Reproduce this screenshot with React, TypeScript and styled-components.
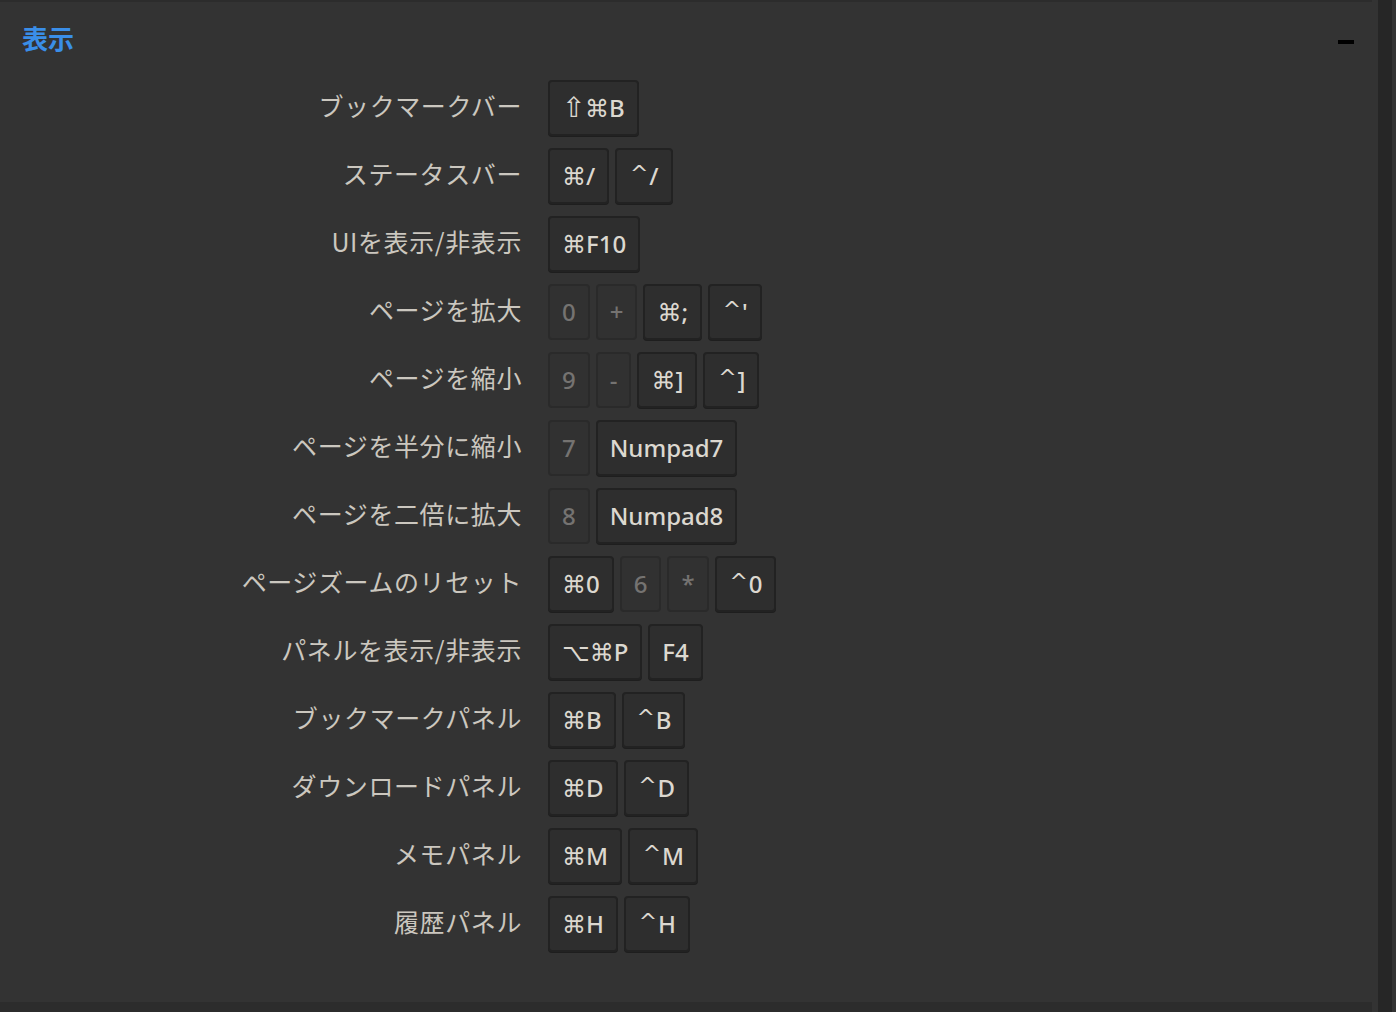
import React from "react";
import styled, { createGlobalStyle } from "styled-components";

const Global = createGlobalStyle`
  html, body { margin: 0; padding: 0; background: #2c2c2c; }
  body { font-family: "Noto Sans", "Noto Sans CJK JP", sans-serif; overflow: hidden; }
`;

const Page = styled.div`
  display: flex;
  width: 1396px;
  height: 1012px;
  background: #333333;
`;

const Main = styled.div`
  width: 1372px;
  height: 1012px;
  background: #2c2c2c;
  padding-top: 2px;
  box-sizing: border-box;
`;

const Gutter = styled.div`
  width: 6px;
  background: #333333;
`;

const Track = styled.div`
  width: 14px;
  background: #262626;
`;

const Edge = styled.div`
  width: 4px;
  background: #333333;
`;

const Section = styled.section`
  height: 1000px;
  background: #333333;
  box-sizing: border-box;
  padding: 18px 18px 0 22px;
`;

const Header = styled.div`
  display: flex;
  align-items: center;
  justify-content: space-between;
  height: 36px;
`;

const Title = styled.h2`
  margin: 0;
  font-family: "Noto Sans CJK JP", sans-serif;
  font-size: 26px;
  font-weight: 700;
  color: #3a8ee8;
  line-height: 36px;
`;

const Collapse = styled.button`
  width: 16px;
  height: 4px;
  padding: 0;
  border: none;
  background: #000;
  margin-top: 8px;
`;

const List = styled.div`
  display: flex;
  flex-direction: column;
  gap: 12px;
  margin-top: 24px;
`;

const Row = styled.div`
  display: grid;
  grid-template-columns: 500px 1fr;
  column-gap: 26px;
  align-items: center;
  height: 56px;
`;

const Label = styled.div`
  text-align: right;
  font-family: "Noto Sans CJK JP", sans-serif;
  font-size: 25px;
  letter-spacing: 0.6px;
  color: #cbc7bf;
  white-space: nowrap;
  line-height: 1;
  padding-bottom: 5px;
`;

const Keys = styled.div`
  display: flex;
  gap: 6px;
`;

const Key = styled.kbd<{ $dim?: boolean }>`
  display: flex;
  align-items: center;
  justify-content: center;
  box-sizing: border-box;
  height: 56px;
  padding: 0 12px;
  border-radius: 4px;
  border: 2px solid ${(p) => (p.$dim ? "#2a2a2a" : "#222222")};
  background: ${(p) => (p.$dim ? "#313131" : "#2e2e2e")};
  box-shadow: ${(p) => (p.$dim ? "none" : "0 1px 0 #1e1e1e")};
  color: ${(p) => (p.$dim ? "#757371" : "#dcd8d0")};
  font-family: "Noto Sans", "DejaVu Sans", sans-serif;
  font-size: 24px;
  font-weight: 500;
  line-height: 1;
  white-space: nowrap;
`;

const Shift = styled.span`
  display: inline-block;
  width: 20px;
  margin-right: 3px;
  text-align: center;
  font-family: "DejaVu Sans", sans-serif;
  font-size: 28px;
  line-height: 1;
`;

const Caret = styled.span`
  display: inline-block;
  width: 20px;
  text-align: center;
  font-family: "DejaVu Sans", sans-serif;
  font-size: 22px;
  transform: translateY(-2px);
`;

type K = { t: string; dim?: boolean };
const rows: { label: string; keys: K[] }[] = [
  { label: "ブックマークバー", keys: [{ t: "⇧⌘B" }] },
  { label: "ステータスバー", keys: [{ t: "⌘/" }, { t: "^/" }] },
  { label: "UIを表示/非表示", keys: [{ t: "⌘F10" }] },
  { label: "ページを拡大", keys: [{ t: "0", dim: true }, { t: "+", dim: true }, { t: "⌘;" }, { t: "^'" }] },
  { label: "ページを縮小", keys: [{ t: "9", dim: true }, { t: "-", dim: true }, { t: "⌘]" }, { t: "^]" }] },
  { label: "ページを半分に縮小", keys: [{ t: "7", dim: true }, { t: "Numpad7" }] },
  { label: "ページを二倍に拡大", keys: [{ t: "8", dim: true }, { t: "Numpad8" }] },
  { label: "ページズームのリセット", keys: [{ t: "⌘0" }, { t: "6", dim: true }, { t: "*", dim: true }, { t: "^0" }] },
  { label: "パネルを表示/非表示", keys: [{ t: "⌥⌘P" }, { t: "F4" }] },
  { label: "ブックマークパネル", keys: [{ t: "⌘B" }, { t: "^B" }] },
  { label: "ダウンロードパネル", keys: [{ t: "⌘D" }, { t: "^D" }] },
  { label: "メモパネル", keys: [{ t: "⌘M" }, { t: "^M" }] },
  { label: "履歴パネル", keys: [{ t: "⌘H" }, { t: "^H" }] },
];

function renderKey(t: string) {
  if (t.startsWith("^")) {
    return (
      <>
        <Caret>^</Caret>
        {t.slice(1)}
      </>
    );
  }
  if (t.startsWith("⇧")) {
    return (
      <>
        <Shift>⇧</Shift>
        {t.slice(1)}
      </>
    );
  }
  return t;
}

export default function App() {
  return (
    <>
      <Global />
      <Page>
        <Main>
          <Section>
            <Header>
              <Title>表示</Title>
              <Collapse aria-label="collapse" />
            </Header>
            <List>
              {rows.map((r) => (
                <Row key={r.label}>
                  <Label>{r.label}</Label>
                  <Keys>
                    {r.keys.map((k, i) => (
                      <Key key={i} $dim={k.dim}>
                        {renderKey(k.t)}
                      </Key>
                    ))}
                  </Keys>
                </Row>
              ))}
            </List>
          </Section>
        </Main>
        <Gutter />
        <Track />
        <Edge />
      </Page>
    </>
  );
}
